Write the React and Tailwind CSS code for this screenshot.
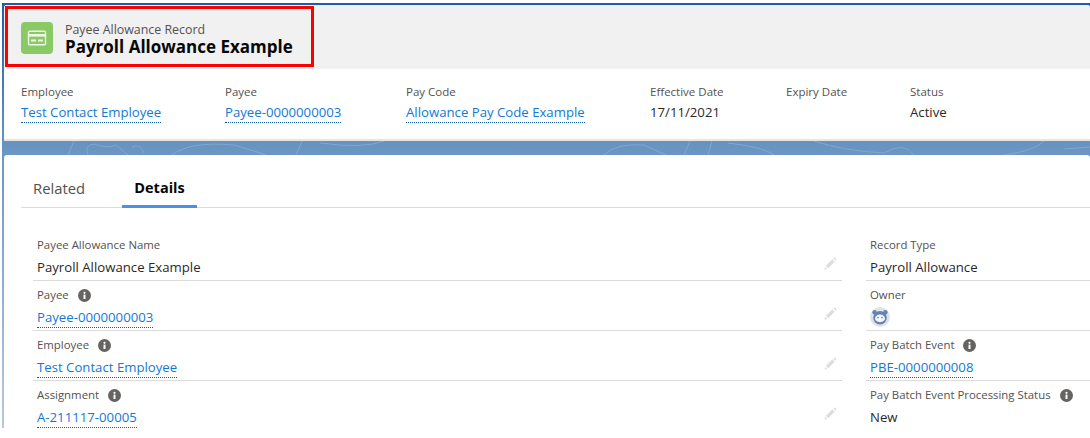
const font = { fontFamily: '"Open Sans", "Noto Sans", sans-serif' };

function Info() {
  return (
    <span className="inline-flex w-[13px] h-[13px] rounded-full bg-[#666463] items-center justify-center ml-[9px]">
      <svg viewBox="0 0 13 13" className="w-[13px] h-[13px]" fill="white">
        <circle cx="6.5" cy="3.8" r="1.1" />
        <rect x="5.5" y="5.6" width="2" height="4.4" />
      </svg>
    </span>
  );
}

function Pencil() {
  return (
    <svg viewBox="0 0 14 14" className="w-[13px] h-[13px]" fill="#dfdedd">
      <path d="M2 9.5 L9 2.5 L11.5 5 L4.5 12 Z" />
      <path d="M1.2 10.6 L3.4 12.8 L0.4 13.6 Z" />
      <path d="M10 1.5 L11 0.7 Q11.7 0.3 12.3 0.9 L13.2 1.8 Q13.7 2.4 13.2 3 L12.4 4 Z" />
    </svg>
  );
}

function Link({ children }) {
  return <span className="text-[#1279d4] border-b border-dotted border-[#0b5cab] pt-[1px] leading-[19px] inline-block">{children}</span>;
}

function Field({ label, info, children, edit = true }) {
  return (
    <div className="h-[50px] border-b border-[#dddbda] relative pl-[4px] pt-[5px]">
      <div className="text-[11.4px] leading-[18px] text-[#54514f] flex items-center h-[18px]">
        {label}
        {info && <Info />}
      </div>
      <div className="text-[13.2px] leading-[20px] text-[#2b2826] mt-[3px] h-[20px]">{children}</div>
      {edit && (
        <div className="absolute right-[5px] top-[26px]">
          <Pencil />
        </div>
      )}
    </div>
  );
}

function Highlight({ label, children, w }) {
  return (
    <div className={w}>
      <div className="text-[11.5px] leading-[18px] text-[#54514f]">{label}</div>
      <div className="text-[13.2px] leading-[20px] text-[#2b2826] mt-[1px]">{children}</div>
    </div>
  );
}

function Owner() {
  return (
    <svg viewBox="0 0 20 20" className="w-[20px] h-[20px]">
      <circle cx="10" cy="10" r="10" fill="#dbe3ef" />
      <circle cx="4.6" cy="5.2" r="2.2" fill="#6683ad" />
      <circle cx="15.4" cy="5.2" r="2.2" fill="#6683ad" />
      <circle cx="10" cy="10.8" r="6.8" fill="#6683ad" />
      <ellipse cx="10" cy="11.4" rx="5" ry="3.8" fill="#f4f6fa" />
      <circle cx="8" cy="10.6" r="0.8" fill="#6683ad" />
      <circle cx="12" cy="10.6" r="0.8" fill="#6683ad" />
    </svg>
  );
}

function Band() {
  return (
    <svg viewBox="0 0 1086 14" className="w-[1086px] h-[14px] block" fill="none" stroke="#84a7cc" strokeWidth="1">
      <path d="M64 14 L70 0 M84 14 Q80 4 90 3 Q104 8 112 4 L124 14 M128 6 Q136 2 140 12 M168 14 Q186 0 230 4 Q250 10 262 14 M292 14 L298 0 M316 2 Q360 8 380 0" />
      <path d="M600 14 Q612 2 640 4 L662 14 M680 14 L686 0 M704 14 L708 0 M724 2 Q760 6 770 14 M810 0 Q840 10 880 12 Q900 0 910 14 M1000 14 Q1030 10 1040 0 M1060 8 L1086 6" />
    </svg>
  );
}

export default function App() {
  return (
    <div className="w-[1090px] h-[438px] overflow-hidden bg-white pl-[2px] pt-[3px]" style={font}>
      <div className="h-[425px] w-[1088px] overflow-hidden bg-linear-to-b from-[#1a5ea8] via-[#6b96c3] via-35% to-[#b8c8de] pl-[2px] pt-[2px] relative">
        <div className="w-[1086px] h-[136px] bg-white rounded-t-[3px] border-b-[2px] border-[#e5e5e5] overflow-hidden">
          <div className="h-[64px] bg-[#f1f1f1] flex items-center pl-[17px] gap-[12px] pt-[4px]">
            <div className="w-[32px] h-[32px] mb-[2px] rounded-[4px] bg-[#8aca66] flex items-center justify-center">
              <svg viewBox="0 0 20 20" className="w-[20px] h-[20px]">
                <rect x="0.8" y="2.5" width="18.4" height="15" rx="2" fill="#eef7e8" />
                <rect x="2.2" y="4" width="15.6" height="2" fill="#8aca66" />
                <rect x="2.2" y="8.6" width="15.6" height="7.4" fill="#8aca66" />
                <rect x="4" y="11.5" width="5" height="2" fill="#eef7e8" />
                <rect x="11" y="11.5" width="5" height="2" fill="#eef7e8" />
              </svg>
            </div>
            <div>
              <div className="text-[12.4px] leading-[16px] text-[#54514f]">Payee Allowance Record</div>
              <div className="text-[17px] leading-[18px] font-bold text-[#080707]">Payroll Allowance Example</div>
            </div>
          </div>
          <div className="flex pl-[17px] pt-[14px]">
            <Highlight label="Employee" w="w-[204px]"><Link>Test Contact Employee</Link></Highlight>
            <Highlight label="Payee" w="w-[181px]"><Link>Payee-0000000003</Link></Highlight>
            <Highlight label="Pay Code" w="w-[244px]"><Link>Allowance Pay Code Example</Link></Highlight>
            <Highlight label="Effective Date" w="w-[136px]">17/11/2021</Highlight>
            <Highlight label="Expiry Date" w="w-[124px]"></Highlight>
            <Highlight label="Status" w="w-[100px]">Active</Highlight>
          </div>
        </div>
        <Band />
        <div className="w-[1086px] h-[273px] bg-white rounded-t-[3px] pt-[20px] pl-[17px]">
          <div className="flex h-[33px] border-b border-[#dddbda] leading-[20px]">
            <div className="pl-[12px] w-[101px] text-[14.8px] text-[#54514f] pt-[3px]">Related</div>
            <div className="w-[75px] h-[33px] border-b-[3px] border-[#4a90e8] text-center text-[14.5px] font-bold text-[#080707] pt-[3px]">Details</div>
          </div>
          <div className="flex mt-[23px] pl-[12px] gap-[24px]">
            <div className="w-[809px] shrink-0">
              <Field label="Payee Allowance Name">Payroll Allowance Example</Field>
              <Field label="Payee" info><Link>Payee-0000000003</Link></Field>
              <Field label="Employee" info><Link>Test Contact Employee</Link></Field>
              <Field label="Assignment" info><Link>A-211117-00005</Link></Field>
            </div>
            <div className="w-[300px] shrink-0">
              <Field label="Record Type" edit={false}>Payroll Allowance</Field>
              <Field label="Owner" edit={false}><Owner /></Field>
              <Field label="Pay Batch Event" info edit={false}><Link>PBE-0000000008</Link></Field>
              <Field label="Pay Batch Event Processing Status" info edit={false}>New</Field>
            </div>
          </div>
        </div>
        <div className="absolute left-[3px] top-[3px] w-[309px] h-[61px] border-[3px] border-[#ff0000]" />
      </div>
    </div>
  );
}
